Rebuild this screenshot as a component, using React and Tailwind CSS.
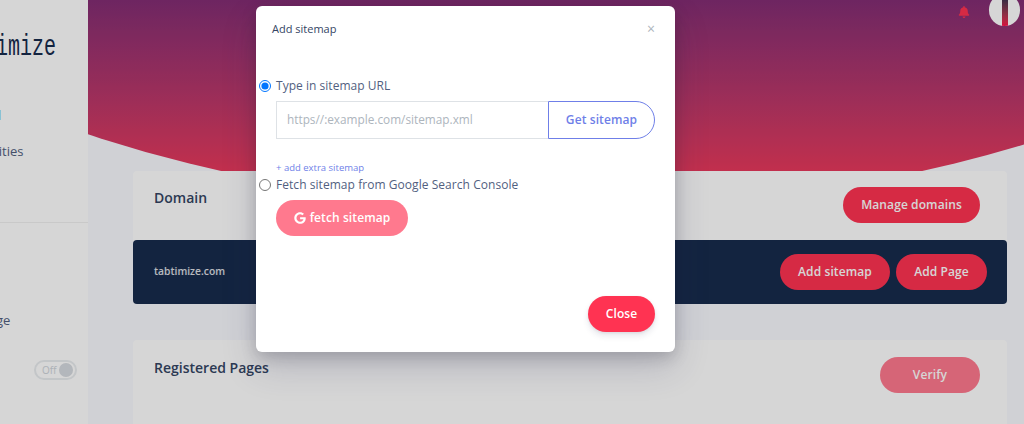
import React from "react";
import { FaBell, FaGoogle } from "react-icons/fa";

const pill = "inline-flex items-center justify-center rounded-full text-white text-[12px] tracking-[0.1px] font-semibold whitespace-nowrap h-[36px]";

function Sidebar() {
  return (
    <aside className="w-[88px] shrink-0 bg-white overflow-hidden flex flex-col text-[13px] text-[#525f7f]">
      <div className="h-[36px] shrink-0" />
      <div className="-ml-[16px] h-[22px] flex items-center">
        <span className="inline-block origin-center scale-y-[1.5] font-['Liberation_Mono',monospace] text-[20px] leading-[22px] text-[#172b4d] whitespace-nowrap">
          timize
        </span>
      </div>
      <div className="mt-[48px] -ml-[66px] h-[18px] leading-[18px] whitespace-nowrap text-[#2f80e0]">Dashboard</div>
      <div className="mt-[18px] -ml-[61px] h-[18px] leading-[18px] whitespace-nowrap">Opportunities</div>
      <div className="mt-[62px] h-px bg-[#f0f0f0]" />
      <div className="mt-[88px] -ml-[19px] h-[18px] leading-[18px] whitespace-nowrap">Page</div>
      <div className="mt-[31px] ml-[34px] w-[43px] h-[20px] rounded-full border-2 border-[#e9ecef] flex items-center justify-between pl-[6px] pr-[2px]">
        <span className="text-[10px] leading-none text-[#ced4da]">Off</span>
        <span className="w-[14px] h-[14px] rounded-full bg-[#d6dae0]" />
      </div>
    </aside>
  );
}

function Main() {
  return (
    <main className="flex-1 min-w-0 bg-[#f8f9fe] overflow-hidden">
      <div className="h-[211px] bg-gradient-to-b from-[#832d74] to-[#e7385c] to-[81%] [clip-path:ellipse(1000px_598px_at_484px_-389px)] flex justify-end items-start pr-[4px]">
        <FaBell className="mt-[6px] mr-[19px] text-[#ff3352]" size={12} />
        <div className="-mt-[6px] w-[31px] h-[32px] rounded-full bg-white flex justify-center overflow-hidden">
          <div className="w-[6px] h-full bg-gradient-to-b from-[#172b4d] to-[#ff0a4a]" />
        </div>
      </div>
      <div className="relative -mt-[40px] ml-[45px] mr-[17px]">
        <section className="bg-white rounded-[4px]">
          <div className="h-[69px] flex items-start justify-between pl-[21px] pr-[27px] pt-[16px]">
            <h3 className="text-[14px] leading-[20px] font-semibold text-[#344563] mt-[1px]">Domain</h3>
            <button className={`${pill} w-[137px] bg-[#ff3352]`}>Manage domains</button>
          </div>
          <div className="h-[64px] bg-[#172b4d] rounded-[4px] flex items-center justify-between pl-[21px] pr-[20px]">
            <span className="text-[10.3px] font-semibold text-white/85">tabtimize.com</span>
            <div className="flex gap-[6px]">
              <button className={`${pill} w-[110px] bg-[#ff3352]`}>Add sitemap</button>
              <button className={`${pill} w-[91px] bg-[#ff3352]`}>Add Page</button>
            </div>
          </div>
        </section>
        <section className="mt-[36px] h-[120px] bg-white rounded-[4px] flex items-start justify-between pl-[21px] pr-[27px] pt-[17px]">
          <h3 className="text-[14px] leading-[20px] font-semibold text-[#344563] mt-[1px]">Registered Pages</h3>
          <button className={`${pill} w-[100px] bg-[#ff3352] opacity-65`}>Verify</button>
        </section>
      </div>
    </main>
  );
}

function SitemapModal() {
  return (
    <div className="absolute inset-0 bg-black/16">
      <div className="ml-[256px] mt-[6px] w-[419px] h-[346px] bg-white rounded-[6px] shadow-[0_15px_35px_rgba(50,50,93,0.2),0_5px_15px_rgba(0,0,0,0.17)] text-[#525f7f] px-[20px]">
        <div className="h-[46px] flex items-center justify-between">
          <h5 className="-ml-[4px] text-[11px] font-medium text-[#344563]">Add sitemap</h5>
          <span className="text-[14px] leading-none text-[#adb5bd]">×</span>
        </div>
        <label className="mt-[24px] h-[20px] flex items-center text-[12px] tracking-[0.03px] -ml-[17px]">
          <input type="radio" name="sitemap" defaultChecked className="w-[12px] h-[12px] m-0 mr-[5px]" />
          Type in sitemap URL
        </label>
        <div className="mt-[5px] flex h-[38px]">
          <input
            placeholder="https//:example.com/sitemap.xml"
            className="w-[272px] border border-[#dee2e6] border-r-0 px-[10px] text-[11.8px] outline-none placeholder:text-[#adb5bd]"
          />
          <button className="flex-1 border border-[#6f7fe8] rounded-r-full text-[12px] tracking-[0.1px] font-semibold text-[#6f7fe8]">Get sitemap</button>
        </div>
        <div className="mt-[23px] h-[12px] leading-[12px] text-[9.5px] text-[#6f7fe8]">+ add extra sitemap</div>
        <label className="mt-[1px] h-[20px] flex items-center text-[12px] tracking-[0.05px] -ml-[17px]">
          <input type="radio" name="sitemap" className="w-[12px] h-[12px] m-0 mr-[5px]" />
          Fetch sitemap from Google Search Console
        </label>
        <button className={`${pill} mt-[5px] w-[132px] gap-[4px] bg-[#ff3352] opacity-65`}>
          <FaGoogle size={12} />
          fetch sitemap
        </button>
        <div className="mt-[60px] flex justify-end">
          <button className={`${pill} w-[67px] bg-[#ff3352] shadow-[0_4px_6px_rgba(50,50,93,0.11),0_1px_3px_rgba(0,0,0,0.08)]`}>Close</button>
        </div>
      </div>
    </div>
  );
}

export default function App() {
  return (
    <div className="relative flex w-[1024px] h-[424px] overflow-hidden font-['Open_Sans',sans-serif]">
      <Sidebar />
      <Main />
      <SitemapModal />
    </div>
  );
}
